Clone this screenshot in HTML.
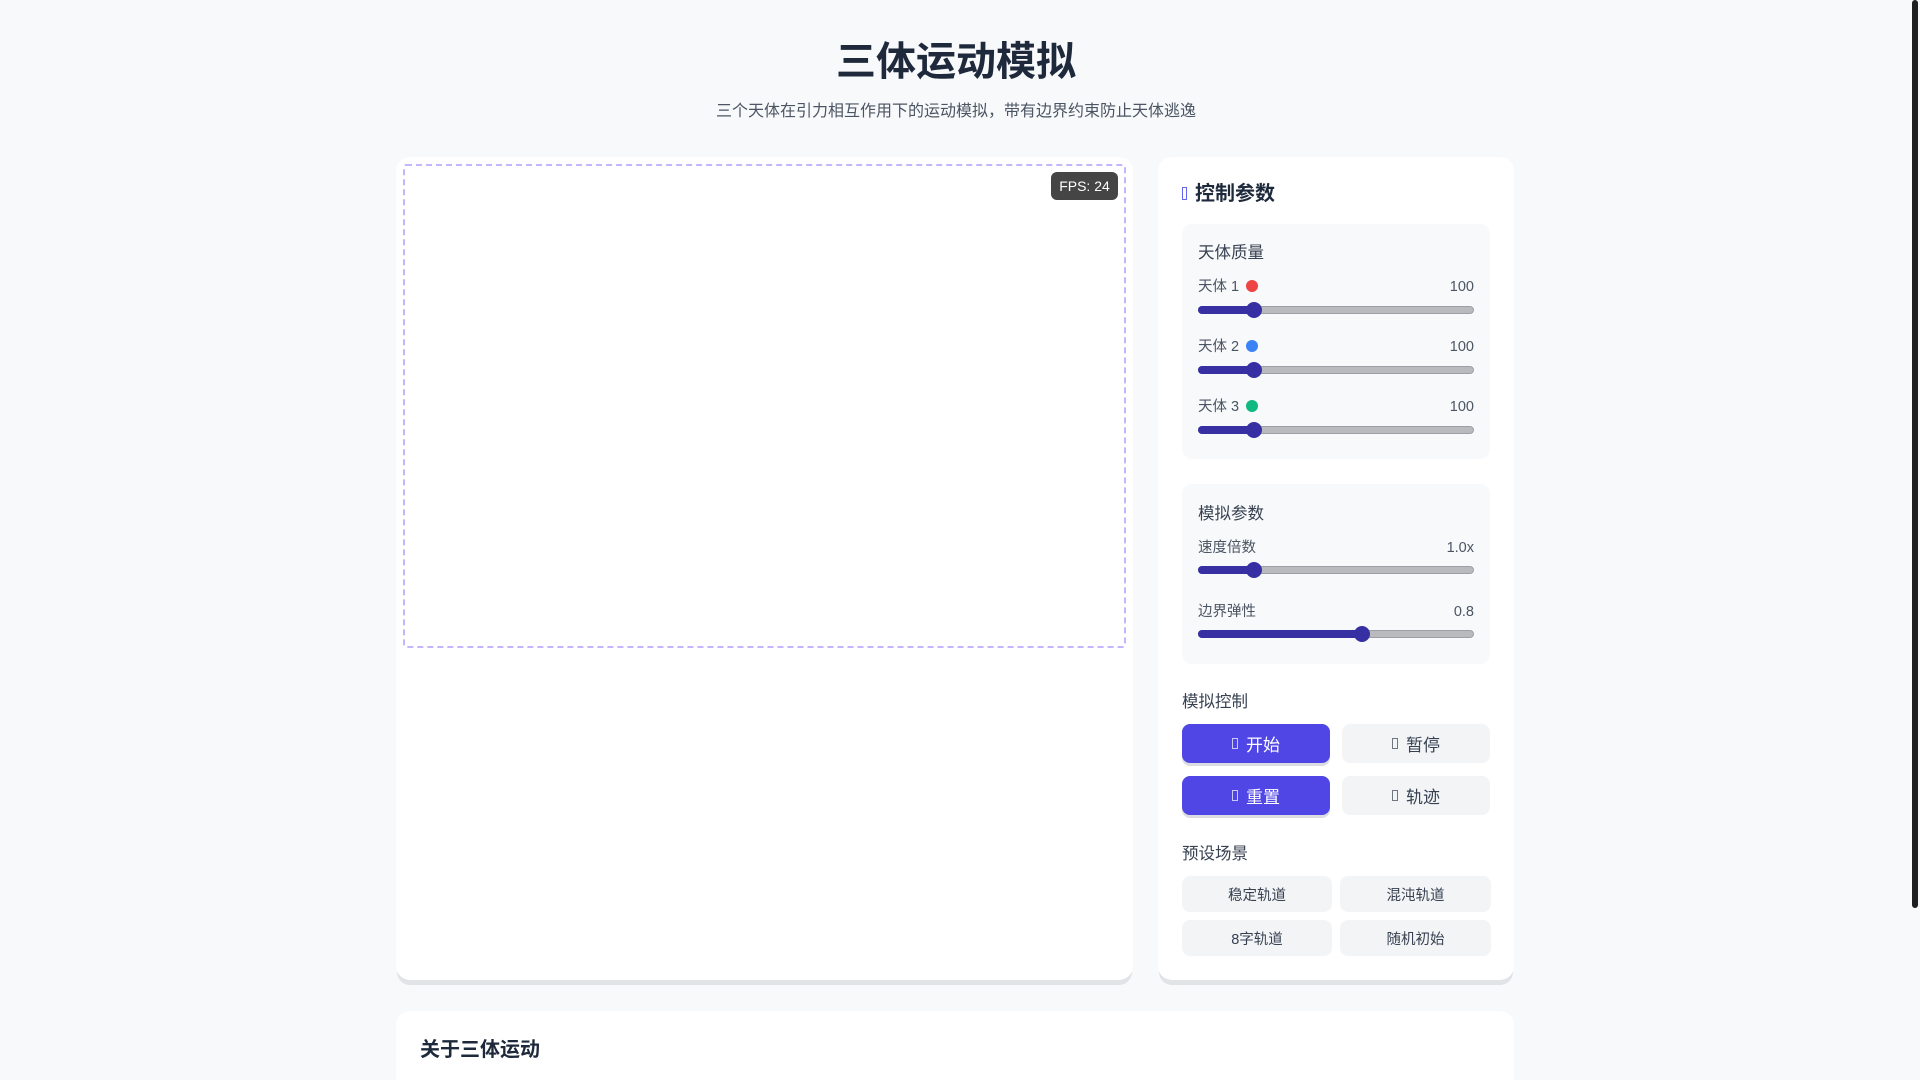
<!DOCTYPE html>
<html><head><meta charset="utf-8">
<style>
*{margin:0;padding:0;box-sizing:border-box}
html,body{width:1920px;height:1080px;overflow:hidden}
body{background:#f8f9fb;font-family:"Liberation Sans","Noto Sans CJK SC",sans-serif;color:#1f2937;position:relative}
.a{position:absolute}
.t{position:absolute;white-space:nowrap;line-height:1}
.card{position:absolute;background:#fff;border-radius:14px;box-shadow:0 6px 0 -1px #e2e3e6}
.box{position:absolute;background:#f8f9fb;border-radius:10px}
.sl{position:absolute;left:1198px;width:276px;height:8px;border-radius:4px;background:#b8babd;border:1px solid #9ca0a6}
.sl i{position:absolute;left:-1px;top:-1px;height:8px;border-radius:4px;background:#3730a3}
.sl b{position:absolute;top:-5px;width:16px;height:16px;border-radius:50%;background:#3730a3}
.lbl{font-size:14.5px;color:#4b5563}
.val{font-size:14.5px;color:#4b5563}
.btn{position:absolute;border-radius:8px;display:flex;align-items:center;justify-content:center;font-size:17px}
.pri{background:#4f46e5;color:#fff;box-shadow:0 3px 0 #dcdde2}
.sec{background:#f3f4f6;color:#374151}
.pre{position:absolute;border-radius:8px;background:#f3f4f6;color:#374151;font-size:14.5px;display:flex;align-items:center;justify-content:center}
.ic{display:inline-block;width:6px;height:11px;border:1px solid currentColor;opacity:.7;margin-right:8px}
.dot{display:inline-block;width:12px;height:12px;border-radius:50%;vertical-align:-1px;margin-left:7px}
</style></head><body>
<div class="t" style="left:0;width:1912px;text-align:center;top:42px;font-size:40px;font-weight:bold;color:#1e293b">三体运动模拟</div>
<div class="t" style="left:0;width:1912px;text-align:center;top:104px;font-size:16px;color:#4b5563">三个天体在引力相互作用下的运动模拟，带有边界约束防止天体逃逸</div>

<div class="card" style="left:396px;top:157px;width:737px;height:823px"></div>
<div class="a" style="left:403px;top:164px;width:723px;height:484px;border:2px dashed #c4b5fd;border-radius:3px"></div>
<div class="a" style="left:1051px;top:172px;width:67px;height:28px;background:#454545;border-radius:6px;color:#fff;font-size:14px;display:flex;align-items:center;justify-content:center">FPS: 24</div>

<div class="card" style="left:1158px;top:157px;width:356px;height:823px"></div>
<div class="t" style="left:1182px;top:184px;font-size:20px;font-weight:bold;color:#1e293b"><span style="display:inline-block;width:5px;height:13px;border:1px solid #6366f1;margin-right:8px;vertical-align:0"></span>控制参数</div>

<div class="box" style="left:1182px;top:224px;width:308px;height:235px"></div>
<div class="t" style="left:1198px;top:245px;font-size:16.5px;color:#374151">天体质量</div>
<div class="t lbl" style="left:1198px;top:280px">天体 1<span class="dot" style="background:#ef4444"></span></div><div class="t val" style="left:1416px;width:58px;text-align:right;top:280px">100</div>
<div class="sl" style="top:306px"><i style="width:57px"></i><b style="left:47px"></b></div>
<div class="t lbl" style="left:1198px;top:340px">天体 2<span class="dot" style="background:#3b82f6"></span></div><div class="t val" style="left:1416px;width:58px;text-align:right;top:340px">100</div>
<div class="sl" style="top:366px"><i style="width:57px"></i><b style="left:47px"></b></div>
<div class="t lbl" style="left:1198px;top:400px">天体 3<span class="dot" style="background:#10b981"></span></div><div class="t val" style="left:1416px;width:58px;text-align:right;top:400px">100</div>
<div class="sl" style="top:426px"><i style="width:57px"></i><b style="left:47px"></b></div>

<div class="box" style="left:1182px;top:484px;width:308px;height:180px"></div>
<div class="t" style="left:1198px;top:506px;font-size:16.5px;color:#374151">模拟参数</div>
<div class="t lbl" style="left:1198px;top:541px">速度倍数</div><div class="t val" style="left:1416px;width:58px;text-align:right;top:541px">1.0x</div>
<div class="sl" style="top:566px"><i style="width:57px"></i><b style="left:47px"></b></div>
<div class="t lbl" style="left:1198px;top:605px">边界弹性</div><div class="t val" style="left:1416px;width:58px;text-align:right;top:605px">0.8</div>
<div class="sl" style="top:630px"><i style="width:166px"></i><b style="left:155px"></b></div>

<div class="t" style="left:1182px;top:694px;font-size:16.5px;color:#374151">模拟控制</div>
<div class="btn pri" style="left:1182px;top:724px;width:148px;height:39px"><span class="ic"></span>开始</div>
<div class="btn sec" style="left:1342px;top:724px;width:148px;height:39px"><span class="ic"></span>暂停</div>
<div class="btn pri" style="left:1182px;top:776px;width:148px;height:39px"><span class="ic"></span>重置</div>
<div class="btn sec" style="left:1342px;top:776px;width:148px;height:39px"><span class="ic"></span>轨迹</div>

<div class="t" style="left:1182px;top:846px;font-size:16.5px;color:#374151">预设场景</div>
<div class="pre" style="left:1182px;top:876px;width:150px;height:36px">稳定轨道</div>
<div class="pre" style="left:1340px;top:876px;width:151px;height:36px">混沌轨道</div>
<div class="pre" style="left:1182px;top:920px;width:150px;height:36px">8字轨道</div>
<div class="pre" style="left:1340px;top:920px;width:151px;height:36px">随机初始</div>

<div class="a" style="left:396px;top:1011px;width:1118px;height:100px;background:#fff;border-radius:14px"></div>
<div class="t" style="left:420px;top:1040px;font-size:20px;font-weight:bold;color:#1e293b">关于三体运动</div>

<div class="a" style="left:1912px;top:0;width:6px;height:908px;background:#1f1f1f;border-radius:3px"></div>
</body></html>
